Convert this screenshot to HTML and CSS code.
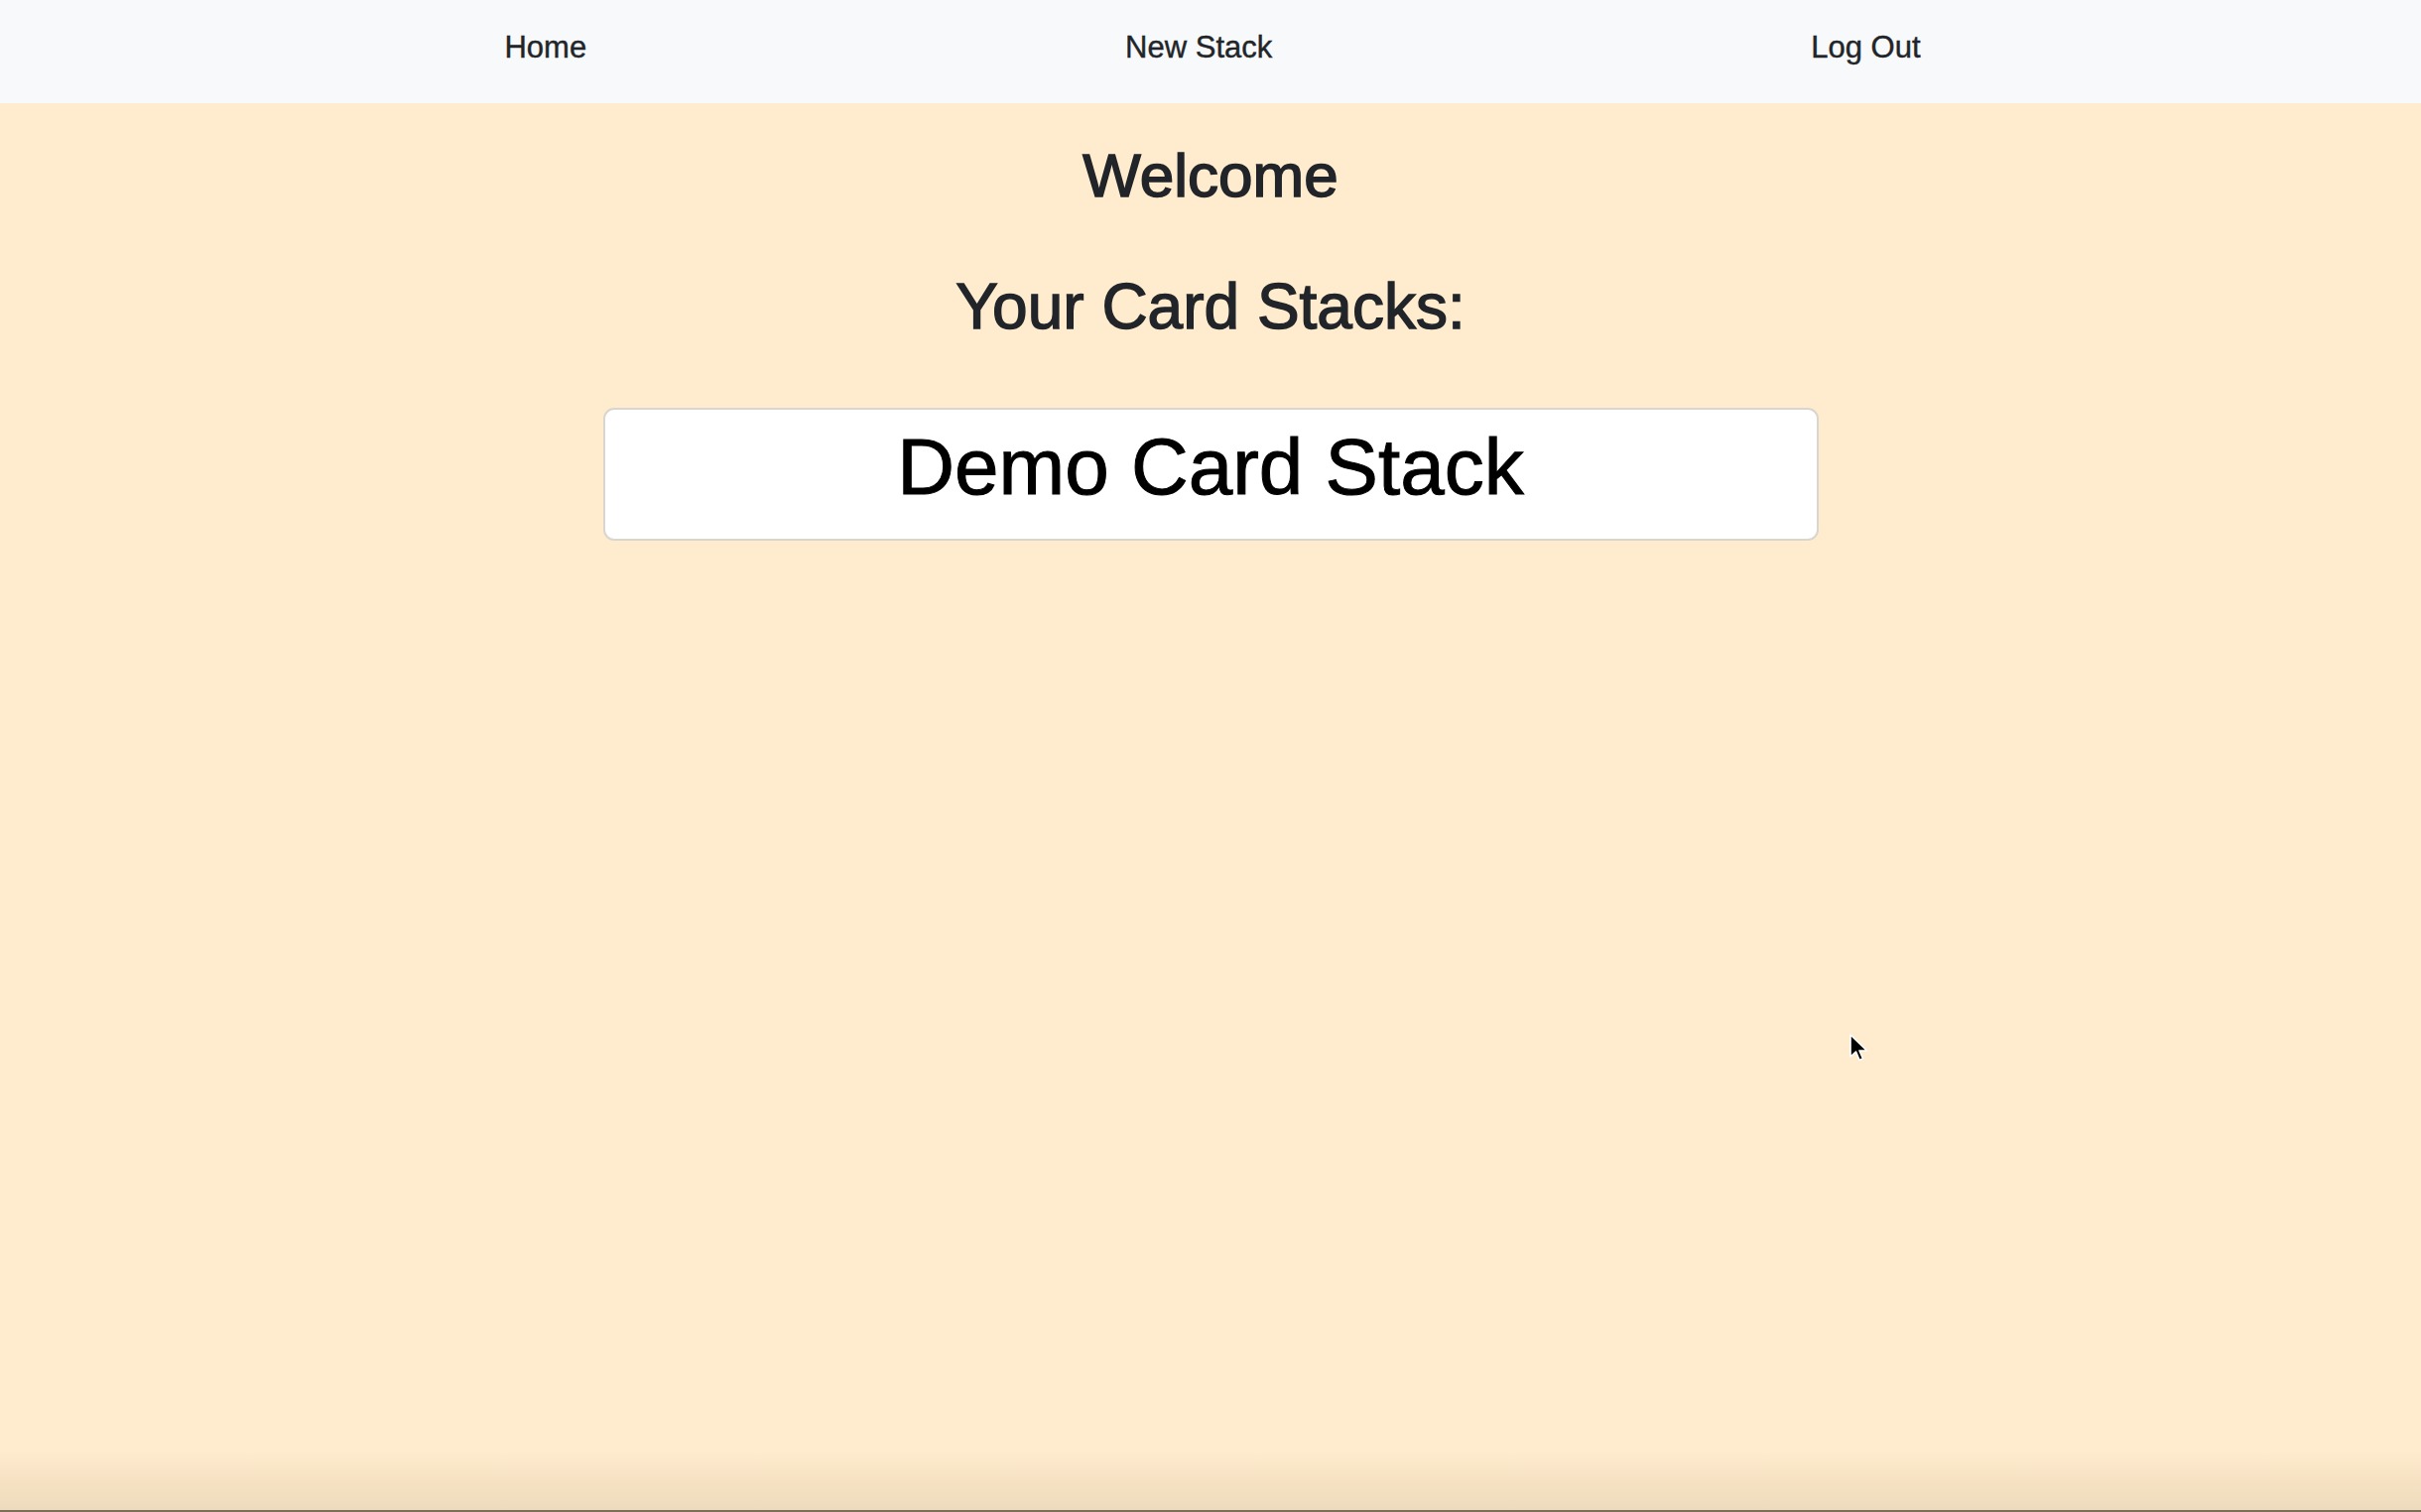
FILE: index.html
```html
<!DOCTYPE html>
<html lang="en">
<head>
<meta charset="utf-8">
<title>Card Stacks</title>
<link rel="stylesheet" href="styles.css">
</head>
<body>
<nav class="navbar">
  <a class="nav-link" href="#">Home</a>
  <a class="nav-link" href="#">New Stack</a>
  <a class="nav-link" href="#">Log Out</a>
</nav>
<main class="main">
  <h1 class="welcome">Welcome</h1>
  <h2 class="stacks-title">Your Card Stacks:</h2>
  <div class="stack-card">
    <h3 class="stack-name">Demo Card Stack</h3>
  </div>
  <svg class="cursor" width="22" height="30" viewBox="0 0 22 30">
    <path d="M2 1 L2 23 L7.5 18 L11 26.5 L14.5 25 L11 17 L18.5 17 Z" fill="#000" stroke="#fff" stroke-width="1.6" stroke-linejoin="round"/>
  </svg>
</main>
<div class="bottom-edge"></div>
</body>
</html>
```

FILE: styles.css
```css
html, body {
  margin: 0;
  padding: 0;
}

body {
  height: 1524px;
  display: flex;
  flex-direction: column;
  font-family: "Liberation Sans", Arial, sans-serif;
  color: #212529;
  background: #ffebcd;
  overflow: hidden;
}

.navbar {
  height: 104px;
  box-sizing: border-box;
  padding: 32px 233px 0 237px;
  background: #f8f9fa;
  display: flex;
  justify-content: space-around;
  align-items: flex-start;
  flex-shrink: 0;
}

.nav-link {
  font-size: 31px;
  line-height: 1;
  color: #212529;
  text-decoration: none;
  -webkit-text-stroke: 0.4px #212529;
}

.main {
  flex: 1;
  position: relative;
  display: flex;
  flex-direction: column;
  align-items: center;
  background: linear-gradient(to bottom, #ffebcd 0, #ffebcd calc(100% - 60px), #f6e2c3 calc(100% - 28px), #eedbbd 100%);
}

.welcome {
  margin: 36px 0 0;
  font-size: 62px;
  font-weight: 400;
  line-height: 1.2;
  color: #212529;
  -webkit-text-stroke: 1.6px #212529;
}

.stacks-title {
  margin: 57px 0 0;
  font-size: 64px;
  font-weight: 400;
  line-height: 1.2;
  color: #212529;
  -webkit-text-stroke: 1.4px #212529;
}

.stack-card {
  margin-top: 63px;
  width: 1225px;
  height: 134px;
  box-sizing: border-box;
  background: #fff;
  border: 2px solid #d9d6d0;
  border-radius: 11px;
  padding-top: 10px;
  text-align: center;
}

.stack-name {
  margin: 0;
  font-size: 80px;
  font-weight: 400;
  line-height: 1.2;
  color: #000;
  -webkit-text-stroke: 1px #000;
}

.cursor {
  position: absolute;
  left: 1863px;
  top: 938px;
}

.bottom-edge {
  height: 2px;
  background: #7a6f58;
  flex-shrink: 0;
}
```
